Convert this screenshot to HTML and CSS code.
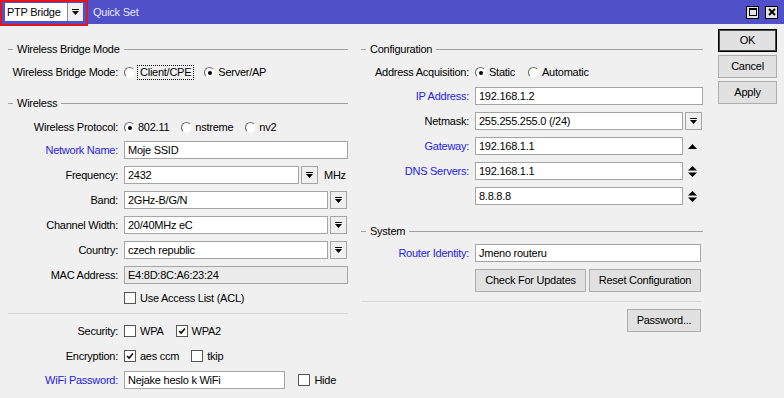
FILE: index.html
```html
<!DOCTYPE html>
<html lang="en">
<head>
    <meta charset="UTF-8">
    <meta name="viewport" content="width=device-width, initial-scale=1.0">
    <title>Quick Set</title>
    <link rel="stylesheet" href="styles.css">
</head>
<body>
    <svg class="sprite" width="0" height="0">
        <symbol id="dd-arrow" viewBox="0 0 7 6">
            <rect x="0" y="0" width="7" height="1"/>
            <path d="M0 2h7l-3.5 4z"/>
        </symbol>
        <symbol id="up-arrow" viewBox="0 0 9 5">
            <path d="M0 5L4.5 0L9 5z"/>
        </symbol>
        <symbol id="updown-arrow" viewBox="0 0 9 11">
            <path d="M0 4.5L4.5 0L9 4.5z M0 6.5h9L4.5 11z"/>
        </symbol>
        <symbol id="tick" viewBox="0 0 12 12">
            <path d="M2.5 6l2.5 2.5 4.5-5.5" fill="none" stroke="#000" stroke-width="1.8"/>
        </symbol>
    </svg>

    <div class="window">
        <div class="titlebar">
            <div class="preset">
                <span class="preset-field">PTP Bridge</span>
                <span class="preset-btn"><svg class="dd"><use href="#dd-arrow"/></svg></span>
                <span class="highlight"></span>
            </div>
            <span class="title">Quick Set</span>
            <div class="win-btns">
                <span class="win-btn">
                    <svg width="8" height="8" viewBox="0 0 8 8"><rect x="0.5" y="0.5" width="7" height="7" fill="none" stroke="#000"/><rect x="0" y="0" width="8" height="2"/></svg>
                </span>
                <span class="win-btn">
                    <svg width="8" height="8" viewBox="0 0 8 8"><path d="M1 1L7 7M7 1L1 7" stroke="#000" stroke-width="1.8"/></svg>
                </span>
            </div>
        </div>

        <div class="content">
            <!-- left: wireless -->
            <section class="col left">
                <div class="group-title">Wireless Bridge Mode</div>
                <div class="row r-mode">
                    <span class="label">Wireless Bridge Mode:</span>
                    <span class="opt opt-focus"><i class="radio"></i><span class="focus">Client/CPE</span></span>
                    <span class="opt"><i class="radio on"></i>Server/AP</span>
                </div>

                <div class="group-title g-wireless">Wireless</div>
                <div class="row r-proto">
                    <span class="label">Wireless Protocol:</span>
                    <span class="opt"><i class="radio on"></i>802.11</span>
                    <span class="opt"><i class="radio"></i>nstreme</span>
                    <span class="opt"><i class="radio"></i>nv2</span>
                </div>
                <div class="row r-first">
                    <span class="label link">Network Name:</span>
                    <span class="field grow">Moje SSID</span>
                </div>
                <div class="row">
                    <span class="label">Frequency:</span>
                    <span class="field w-freq">2432</span>
                    <span class="dd-btn"><svg class="dd"><use href="#dd-arrow"/></svg></span>
                    <span class="unit">MHz</span>
                </div>
                <div class="row">
                    <span class="label">Band:</span>
                    <span class="field w-sel">2GHz-B/G/N</span>
                    <span class="dd-btn"><svg class="dd"><use href="#dd-arrow"/></svg></span>
                </div>
                <div class="row">
                    <span class="label">Channel Width:</span>
                    <span class="field w-sel">20/40MHz eC</span>
                    <span class="dd-btn"><svg class="dd"><use href="#dd-arrow"/></svg></span>
                </div>
                <div class="row">
                    <span class="label">Country:</span>
                    <span class="field w-sel">czech republic</span>
                    <span class="dd-btn"><svg class="dd"><use href="#dd-arrow"/></svg></span>
                </div>
                <div class="row">
                    <span class="label">MAC Address:</span>
                    <span class="field grow disabled">E4:8D:8C:A6:23:24</span>
                </div>
                <div class="row r-acl">
                    <span class="label"></span>
                    <span class="opt"><i class="check"></i>Use Access List (ACL)</span>
                </div>

                <hr class="sep">

                <div class="row r-sec">
                    <span class="label">Security:</span>
                    <span class="opt"><i class="check"></i>WPA</span>
                    <span class="opt"><i class="check"><svg><use href="#tick"/></svg></i>WPA2</span>
                </div>
                <div class="row r-enc">
                    <span class="label">Encryption:</span>
                    <span class="opt"><i class="check"><svg><use href="#tick"/></svg></i>aes ccm</span>
                    <span class="opt"><i class="check"></i>tkip</span>
                </div>
                <div class="row r-pw">
                    <span class="label link">WiFi Password:</span>
                    <span class="field w-pw">Nejake heslo k WiFi</span>
                    <span class="opt"><i class="check"></i>Hide</span>
                </div>
            </section>

            <!-- right: configuration / system -->
            <section class="col right">
                <div class="group-title">Configuration</div>
                <div class="row r-mode">
                    <span class="label">Address Acquisition:</span>
                    <span class="opt"><i class="radio on"></i>Static</span>
                    <span class="opt"><i class="radio"></i>Automatic</span>
                </div>
                <div class="row r-ip">
                    <span class="label link">IP Address:</span>
                    <span class="field grow">192.168.1.2</span>
                </div>
                <div class="row">
                    <span class="label">Netmask:</span>
                    <span class="field w-net">255.255.255.0 (/24)</span>
                    <span class="dd-btn"><svg class="dd"><use href="#dd-arrow"/></svg></span>
                </div>
                <div class="row">
                    <span class="label link">Gateway:</span>
                    <span class="field w-net">192.168.1.1</span>
                    <svg class="arrow up"><use href="#up-arrow"/></svg>
                </div>
                <div class="row">
                    <span class="label link">DNS Servers:</span>
                    <span class="field w-net">192.168.1.1</span>
                    <svg class="arrow updown"><use href="#updown-arrow"/></svg>
                </div>
                <div class="row">
                    <span class="label"></span>
                    <span class="field w-net">8.8.8.8</span>
                    <svg class="arrow updown"><use href="#updown-arrow"/></svg>
                </div>

                <div class="group-title g-system">System</div>
                <div class="row r-ident">
                    <span class="label link">Router Identity:</span>
                    <span class="field w-ident">Jmeno routeru</span>
                </div>
                <div class="btn-row">
                    <span class="btn w-check">Check For Updates</span>
                    <span class="btn w-reset">Reset Configuration</span>
                </div>

                <hr class="sep sep-right">

                <div class="pw-row">
                    <span class="btn w-pass">Password...</span>
                </div>
            </section>

            <!-- dialog buttons -->
            <div class="actions">
                <span class="btn default">OK</span>
                <span class="btn">Cancel</span>
                <span class="btn">Apply</span>
            </div>
        </div>
    </div>
</body>
</html>
```

FILE: styles.css
```css
* {
    margin: 0;
    padding: 0;
    box-sizing: border-box;
}

body {
    width: 784px;
    height: 398px;
    overflow: hidden;
    background: #f0f0f0;
    color: #000;
    font-family: 'Liberation Sans', Arial, sans-serif;
    font-size: 11px;
    letter-spacing: -0.25px;
    line-height: 1;
}

.sprite {
    position: absolute;
    width: 0;
    height: 0;
}

/* title bar */

.titlebar {
    display: flex;
    align-items: center;
    height: 24px;
    background: #5050c8;
}

.preset {
    position: relative;
    display: flex;
    height: 18px;
    margin-left: 5px;
    background: #fff;
}

.preset-field {
    display: flex;
    align-items: center;
    width: 62px;
    padding-left: 2px;
}

.preset-btn {
    display: flex;
    align-items: center;
    justify-content: center;
    width: 16px;
    background: #f0f0f0;
    border-left: 1px solid #8a8a8a;
}

.highlight {
    position: absolute;
    left: -5px;
    top: -3px;
    width: 88px;
    height: 26px;
    border: 2px solid #e3141c;
}

.title {
    margin-left: 10px;
    color: #e6e6ff;
}

.win-btns {
    display: flex;
    gap: 6px;
    margin-left: auto;
    margin-right: 6px;
}

.win-btn {
    display: flex;
    align-items: center;
    justify-content: center;
    width: 13px;
    height: 13px;
    background: #e4e4e4;
    border: 1px solid #000;
}

.dd {
    width: 7px;
    height: 6px;
    fill: #000;
}

/* layout */

.content {
    display: flex;
    align-items: flex-start;
}

.col {
    display: flex;
    flex-direction: column;
    padding-top: 16px;
}

.left {
    width: 340px;
    margin-left: 8px;
}

.right {
    width: 342px;
    margin-left: 13px;
}

.actions {
    display: flex;
    flex-direction: column;
    gap: 3px;
    width: 59px;
    margin-left: 15px;
    padding-top: 5px;
}

/* group titles */

.group-title {
    display: flex;
    align-items: center;
    gap: 4px;
    height: 18px;
}

.group-title::before,
.group-title::after {
    content: '';
    height: 1px;
    background: #a0a0a0;
}

.group-title::before {
    width: 5px;
}

.group-title::after {
    flex: 1;
}

.g-wireless {
    margin-top: 13px;
}

.g-system {
    margin-top: 17px;
}

/* rows */

.row {
    display: flex;
    align-items: center;
    height: 18px;
    margin-top: 7px;
}

.label {
    flex-shrink: 0;
    width: 110px;
    margin-right: 6px;
    text-align: right;
    white-space: nowrap;
}

.right .label {
    width: 108px;
}

.link {
    color: #2222e6;
}

.r-mode {
    margin-top: 5px;
}

.r-proto {
    margin-top: 6px;
}

.r-first {
    margin-top: 5px;
}

.r-acl {
    margin-top: 5px;
}

.r-sec {
    margin-top: 8px;
}

.r-pw {
    margin-top: 6px;
}

.r-ip {
    margin-top: 6px;
}

.r-ident {
    margin-top: 4px;
}

/* fields */

.field {
    display: flex;
    align-items: center;
    height: 18px;
    padding: 0 3px;
    background: #fff;
    border: 1px solid #a5a5a5;
    white-space: nowrap;
}

.field.disabled {
    background: #ebebeb;
}

.grow {
    flex: 1;
}

.w-freq { width: 175px; }
.w-sel { width: 204px; }
.w-pw { width: 170px; margin-right: 13px; }
.w-net { width: 208px; }
.w-ident { width: 226px; }

.dd-btn {
    display: flex;
    align-items: center;
    justify-content: center;
    width: 17px;
    height: 18px;
    margin-left: 2px;
    background: #f0f0f0;
    border: 1px solid #a5a5a5;
}

.unit {
    margin-left: 6px;
}

.arrow {
    margin-left: 5px;
    fill: #000;
}

.arrow.up {
    width: 9px;
    height: 5px;
}

.arrow.updown {
    width: 9px;
    height: 11px;
}

/* radios and checkboxes */

.opt {
    display: inline-flex;
    align-items: center;
    gap: 3px;
    margin-right: 12px;
    white-space: nowrap;
}

.opt-focus {
    gap: 2px;
    margin-right: 10px;
}

.r-sec .opt:first-of-type {
    margin-right: 18px;
}

.r-enc .opt:first-of-type {
    margin-right: 11px;
}

.right .r-mode .opt {
    margin-right: 13px;
}

.focus {
    padding: 1px 2px;
    border: 1px dotted #000;
}

.radio {
    position: relative;
    width: 11px;
    height: 11px;
    border-radius: 50%;
    background: #fff;
    border: 1px solid;
    border-color: #6a6a6a #f6f6f6 #f6f6f6 #6a6a6a;
}

.radio.on::after {
    content: '';
    position: absolute;
    left: 3px;
    top: 3px;
    width: 4px;
    height: 4px;
    border-radius: 50%;
    background: #000;
}

.check {
    display: flex;
    width: 12px;
    height: 12px;
    margin-right: 1px;
    background: #fff;
    border: 1px solid #555;
}

.check svg {
    width: 10px;
    height: 10px;
}

/* separators */

.sep {
    height: 1px;
    margin-top: 6px;
    border: 0;
    background: #d6d6d6;
}

.sep-right {
    margin: 9px 2px 0 1px;
}

.r-sec {
    margin-top: 8px;
}

/* buttons */

.btn {
    display: flex;
    align-items: center;
    justify-content: center;
    height: 23px;
    background: #e1e1e1;
    border: 1px solid #adadad;
    white-space: nowrap;
}

.btn.default {
    border: 1px solid #000;
    box-shadow: inset 0 0 0 1px #4a4a4a;
}

.btn-row {
    display: flex;
    gap: 3px;
    margin-top: 7px;
    padding-left: 114px;
}

.w-check { width: 111px; }
.w-reset { width: 112px; }
.w-pass { width: 74px; height: 23px; }

.pw-row {
    display: flex;
    justify-content: flex-end;
    margin-top: 7px;
    padding-right: 2px;
}
```
